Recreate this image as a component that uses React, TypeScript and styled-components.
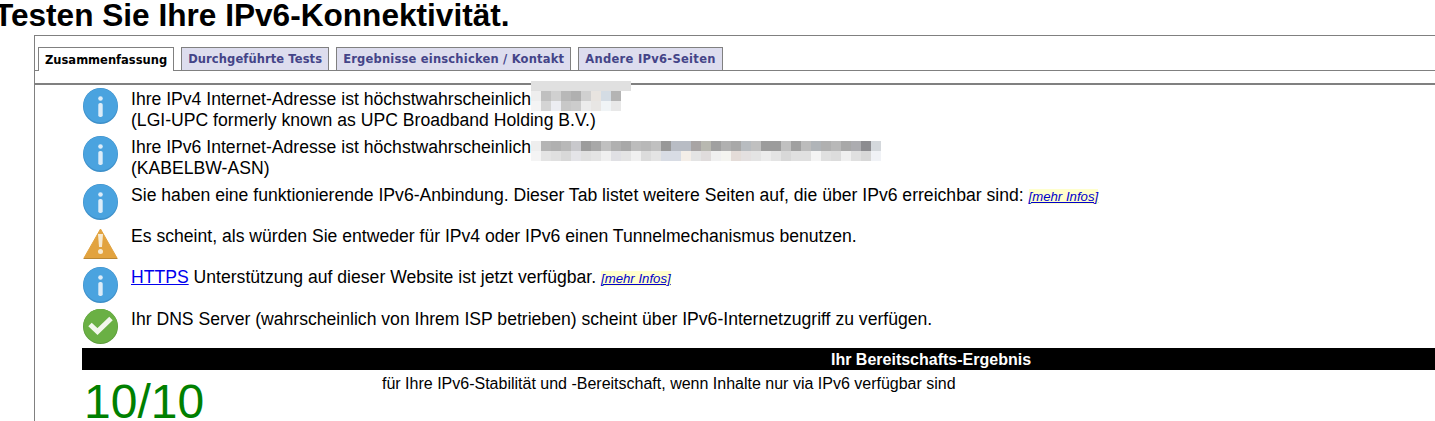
import React from 'react';
import styled, { createGlobalStyle } from 'styled-components';

const GlobalStyle = createGlobalStyle`
  html, body {
    margin: 0;
    padding: 0;
    background: #fff;
    overflow: hidden;
  }
  body {
    font-family: 'Liberation Sans', Arial, sans-serif;
    color: #000;
  }
`;

const Page = styled.div`
  width: 1435px;
  height: 421px;
  overflow: hidden;
`;

const Title = styled.h1`
  margin: 0 0 0 -6px;
  height: 35px;
  font-size: 31.6px;
  line-height: 30px;
  font-weight: bold;
  white-space: nowrap;
`;

const Frame = styled.div`
  margin-left: 34px;
  height: 386px;
  border-top: 1px solid #808080;
  border-left: 1px solid #808080;
  box-sizing: border-box;
`;

const TabBar = styled.div`
  display: flex;
  align-items: flex-end;
  gap: 7px;
  height: 35px;
  padding-left: 3px;
  border-bottom: 1px solid #808080;
  box-sizing: border-box;
`;

const Tab = styled.div<{ $active?: boolean; $tracking?: number }>`
  height: ${({ $active }) => ($active ? '24px' : '23px')};
  margin-bottom: ${({ $active }) => ($active ? '-1px' : '0')};
  padding: 0 6px;
  display: flex;
  align-items: center;
  box-sizing: border-box;
  border: 1px solid #808080;
  border-bottom: ${({ $active }) => ($active ? 'none' : '0')};
  background: ${({ $active }) => ($active ? '#fff' : '#ddddee')};
  color: ${({ $active }) => ($active ? '#000' : '#444488')};
  font-family: 'DejaVu Sans', Verdana, sans-serif;
  font-size: 11.5px;
  font-weight: bold;
  letter-spacing: ${({ $tracking = 0 }) => $tracking}px;
  white-space: nowrap;
`;

const Panel = styled.div`
  margin-top: 12px;
  border-top: 2px solid #808080;
  padding-left: 47px;
`;

const Row = styled.div<{ $height: number }>`
  display: flex;
  gap: 13px;
  height: ${({ $height }) => $height}px;
`;

const IconSlot = styled.div<{ $top?: number }>`
  width: 35px;
  margin-left: 1px;
  flex: none;
  padding-top: ${({ $top = 3 }) => $top}px;
`;

const Message = styled.div<{ $top?: number }>`
  font-size: 17.6px;
  line-height: 21px;
  padding-top: ${({ $top = 3 }) => $top}px;
  white-space: nowrap;
`;

const MoreInfo = styled.a`
  font-size: 13.2px;
  font-style: italic;
  color: #0000cc;
  text-decoration: underline;
  background: #ffffcc;
`;

const TextLink = styled.a`
  color: #0000ee;
  text-decoration: underline;
`;

const MosaicAnchor = styled.span`
  position: relative;
  display: inline-block;
  width: 0;
  height: 0;
`;

const Mosaic = styled.svg<{ $top: number }>`
  position: absolute;
  left: 0;
  top: ${({ $top }) => $top}px;
`;

const ResultBar = styled.div`
  width: 1698px;
  background: #000;
  color: #fff;
  font-size: 16px;
  font-weight: bold;
  height: 22px;
  line-height: 23px;
  text-align: center;
`;

const ResultRow = styled.div`
  display: flex;
`;

const Score = styled.div`
  width: 300px;
  padding: 2px 0 0 2px;
  color: #008000;
  font-size: 48px;
  line-height: 60px;
  box-sizing: border-box;
`;

const ScoreNote = styled.div`
  font-size: 16px;
  line-height: 18px;
  padding-top: 5px;
`;

const InfoIcon = () => (
  <svg width="35" height="36" viewBox="0 0 35 36">
    <ellipse cx="17.5" cy="18" rx="17.5" ry="18" fill="#3d8fc9" />
    <ellipse cx="17.5" cy="17.5" rx="17" ry="17" fill="#4aa3df" />
    <circle cx="17.5" cy="10.5" r="2.3" fill="#dcecf8" />
    <rect x="15.3" y="15" width="4.4" height="14" rx="1.8" fill="#dcecf8" />
  </svg>
);

const WarnIcon = () => (
  <svg width="35" height="31" viewBox="0 0 35 31">
    <path d="M17.5 1 L34 30 H1 Z" fill="#e2a33f" stroke="#e2a33f" strokeLinejoin="round" />
    <path d="M0.5 30.5 H34.5" stroke="#b98634" strokeWidth="1" />
    <path d="M15 6 H20 L19 19 H16 Z" fill="#f6ead2" />
    <circle cx="17.5" cy="23.5" r="2.5" fill="#f6ead2" />
  </svg>
);

const CheckIcon = () => (
  <svg width="35" height="35" viewBox="0 0 35 35">
    <circle cx="17.5" cy="17.5" r="17.5" fill="#5a9a38" />
    <circle cx="17.5" cy="17" r="17" fill="#6ab044" />
    <path d="M7 15.5 L14.5 22.5 L28 9.5" fill="none" stroke="#f2f7ec" strokeWidth="5" />
  </svg>
);

const ipv4Top = ['#eeeeee', '#c0c0c0', '#d0d0d0', '#b8b8b8', '#b0b0b0', '#d0d0d0', '#e8e4e0', '#d4dce4', '#b4b4b4'];
const ipv4Bottom = ['#f4f4f4', '#d4d4d4', '#ecedf2', '#c8c8c8', '#cccccc', '#ececec', '#e8e6e4', '#f0f4f6', '#e8e8e8'];

const ipv6Top = [
  '#eeeeee', '#b4b4b4', '#b0b0b0', '#b8b8b8', '#c8c8cc', '#9c9c9c', '#a8a8a8', '#c0c0c0', '#b0b0b0', '#a8a8a8',
  '#bcbcbc', '#b8b8b8', '#c0c0c0', '#989898', '#b8bcc4', '#b8bcc4', '#a8a4a4', '#b8b8b0', '#a0a0a0',
  '#b0b0b0', '#a8a8a8', '#b8bcc0', '#c0c0c0', '#9c9c9c', '#9c9c9c', '#c0c0c0', '#a0a0a0', '#bcbcbc', '#b0b4b8',
  '#b0b0b0', '#b8b8b8', '#a8a8a8', '#acacb0', '#8c8c90', '#d4d8dc',
];
const ipv6Bottom = [
  '#f4f4f4', '#e4e4e4', '#e0e0e0', '#d8d8d8', '#e4e4e8', '#e0e0e0', '#e4e4e4', '#f0f0f0', '#e0e0e4', '#e4e4e4',
  '#f0f0f0', '#dcdcdc', '#e4e4e4', '#d8dce4', '#d8dce4', '#f4eee8', '#e4e4e4', '#e0dcdc', '#f0f0f0', '#f4f4f0',
  '#e4dcd8', '#e4e0e0', '#e4e4e4', '#ececec', '#e4e4e4', '#d8d8d8', '#e0e0e0', '#e0e0e0', '#f4f4f4', '#e0e0e0',
  '#dcdcdc', '#f0f0f0', '#e0e0e0', '#d8d8d8', '#f0f2f6',
];

// Unkenntlich gemachte Adresse: ein Raster aus Graustufen, das über dem Text liegt.
const Blur = ({ top, bottom, band, offset }: { top: string[]; bottom: string[]; band?: boolean; offset: number }) => (
  <MosaicAnchor>
    <Mosaic $top={offset} width={top.length * 10 + (band ? 10 : 0)} height={band ? 30 : 20} shapeRendering="crispEdges">
      {band && <rect x={0} y={0} width={100} height={10} fill="#e0e0e0" />}
      {top.map((c, i) => (
        <rect key={`t${i}`} x={i * 10} y={band ? 10 : 0} width={10} height={10} fill={c} />
      ))}
      {bottom.map((c, i) => (
        <rect key={`b${i}`} x={i * 10} y={band ? 20 : 10} width={10} height={10} fill={c} />
      ))}
    </Mosaic>
  </MosaicAnchor>
);

export default function App() {
  return (
    <Page>
      <GlobalStyle />
      <Title>Testen Sie Ihre IPv6-Konnektivität.</Title>
      <Frame>
        <TabBar>
          <Tab $active>Zusammenfassung</Tab>
          <Tab $tracking={0.1}>Durchgeführte Tests</Tab>
          <Tab $tracking={0.2}>Ergebnisse einschicken / Kontakt</Tab>
          <Tab $tracking={0.3}>Andere IPv6-Seiten</Tab>
        </TabBar>
        <Panel>
          <Row $height={48}>
            <IconSlot><InfoIcon /></IconSlot>
            <Message $top={4}>
              Ihre IPv4 Internet-Adresse ist höchstwahrscheinlich<Blur top={ipv4Top} bottom={ipv4Bottom} band offset={-24} />
              <br />
              (LGI-UPC formerly known as UPC Broadband Holding B.V.)
            </Message>
          </Row>
          <Row $height={49}>
            <IconSlot><InfoIcon /></IconSlot>
            <Message $top={4}>
              Ihre IPv6 Internet-Adresse ist höchstwahrscheinlich<Blur top={ipv6Top} bottom={ipv6Bottom} offset={-12} />
              <br />
              (KABELBW-ASN)
            </Message>
          </Row>
          <Row $height={41}>
            <IconSlot $top={2}><InfoIcon /></IconSlot>
            <Message>
              Sie haben eine funktionierende IPv6-Anbindung. Dieser Tab listet weitere Seiten auf, die über IPv6 erreichbar sind: <MoreInfo>[mehr Infos]</MoreInfo>
            </Message>
          </Row>
          <Row $height={41}>
            <IconSlot $top={5}><WarnIcon /></IconSlot>
            <Message>Es scheint, als würden Sie entweder für IPv4 oder IPv6 einen Tunnelmechanismus benutzen.</Message>
          </Row>
          <Row $height={42}>
            <IconSlot><InfoIcon /></IconSlot>
            <Message>
              <TextLink>HTTPS</TextLink> Unterstützung auf dieser Website ist jetzt verfügbar. <MoreInfo>[mehr Infos]</MoreInfo>
            </Message>
          </Row>
          <Row $height={42}>
            <IconSlot><CheckIcon /></IconSlot>
            <Message>Ihr DNS Server (wahrscheinlich von Ihrem ISP betrieben) scheint über IPv6-Internetzugriff zu verfügen.</Message>
          </Row>
          <ResultBar>Ihr Bereitschafts-Ergebnis</ResultBar>
          <ResultRow>
            <Score>10/10</Score>
            <ScoreNote>für Ihre IPv6-Stabilität und -Bereitschaft, wenn Inhalte nur via IPv6 verfügbar sind</ScoreNote>
          </ResultRow>
        </Panel>
      </Frame>
    </Page>
  );
}
